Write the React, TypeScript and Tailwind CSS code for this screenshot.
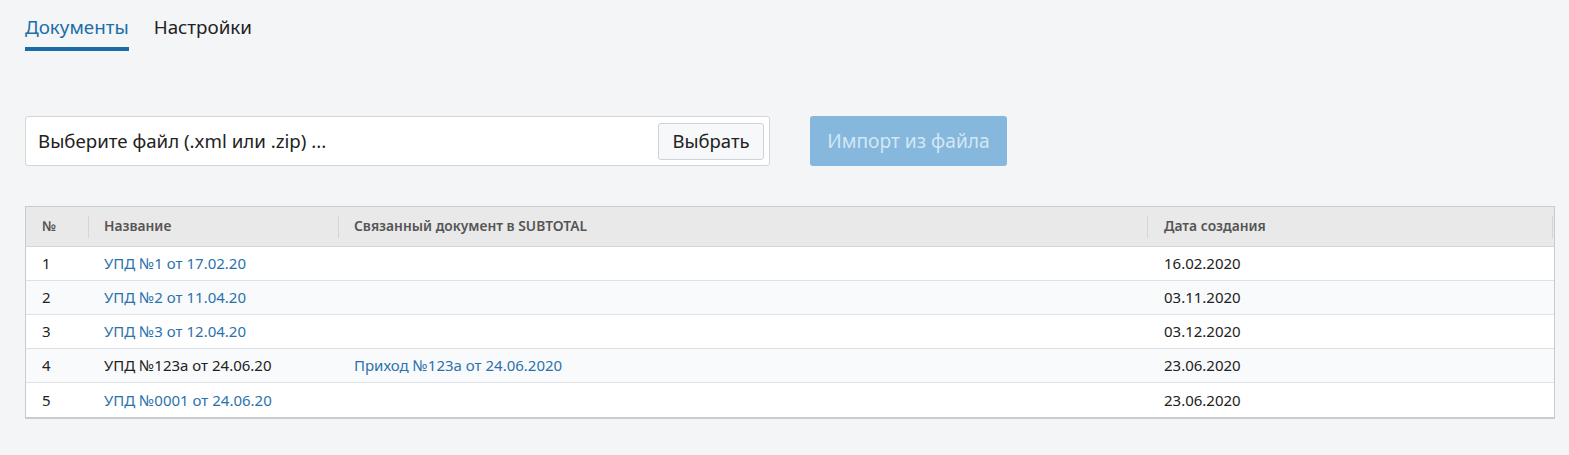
import React from "react";

const rows = [
  { n: "1", name: "УПД №1 от 17.02.20", link: true, rel: "", date: "16.02.2020" },
  { n: "2", name: "УПД №2 от 11.04.20", link: true, rel: "", date: "03.11.2020" },
  { n: "3", name: "УПД №3 от 12.04.20", link: true, rel: "", date: "03.12.2020" },
  { n: "4", name: "УПД №123а от 24.06.20", link: false, rel: "Приход №123а от 24.06.2020", date: "23.06.2020" },
  { n: "5", name: "УПД №0001 от 24.06.20", link: true, rel: "", date: "23.06.2020" },
];

function HeadCell({ label, pad }: { label: string; pad: string }) {
  return (
    <div className={`flex items-center justify-between h-full ${pad}`}>
      <span>{label}</span>
      <span className="w-px h-[22px] bg-[#d5d5d5]" />
    </div>
  );
}

export default function App() {
  return (
    <div
      className="min-h-[455px] bg-[#f4f5f7] px-[25px] pt-[12px] text-[#222]"
      style={{ fontFamily: '"Noto Sans", "Open Sans", sans-serif' }}
    >
      <div className="flex gap-[25px] text-[18.8px]">
        <div className="flex flex-col">
          <span className="text-[#1c6ea8] leading-[30px]">Документы</span>
          <span className="mt-[5px] h-[4px] bg-[#196ca8]" />
        </div>
        <div className="flex flex-col">
          <span className="text-[#222] leading-[30px]">Настройки</span>
        </div>
      </div>

      <div className="mt-[65px] flex items-center gap-[40px]">
        <div className="w-[745px] h-[50px] bg-white border border-[#d6d6d6] rounded-[3px] flex items-center justify-between pl-[12px] pr-[5px]">
          <span className="text-[18.7px]">Выберите файл (.xml или .zip) ...</span>
          <button className="h-[37px] w-[106px] bg-[#f7f8fa] border border-[#cfd2d6] rounded-[3px] text-[18.5px] text-[#222]">
            Выбрать
          </button>
        </div>
        <button className="h-[50px] w-[197px] bg-[#85b8dc] rounded-[3px] text-[19.2px] text-[#d3e7f5]">
          Импорт из файла
        </button>
      </div>

      <div className="mt-[40px] w-[1530px] border border-[#c9cbcd] border-b-2 bg-white text-[15px]">
        <div className="grid grid-cols-[63px_250px_809px_1fr] h-[40px] bg-[#e9e9e9] border-b border-[#d4d6d8] font-semibold text-[#555] text-[13.8px]">
          <HeadCell label="№" pad="pl-[16px]" />
          <HeadCell label="Название" pad="pl-[15px]" />
          <HeadCell label="Связанный документ в SUBTOTAL" pad="pl-[15px]" />
          <HeadCell label="Дата создания" pad="pl-[16px] pr-px" />
        </div>
        {rows.map((r, i) => (
          <div
            key={r.n}
            className={`grid grid-cols-[63px_250px_809px_1fr] h-[34px] items-center ${
              i % 2 === 1 ? "bg-[#f9fafc]" : "bg-white"
            } ${i < rows.length - 1 ? "border-b border-[#dfe2e5]" : ""}`}
          >
            <span className="pl-[16px] text-[#222]">{r.n}</span>
            <span className={`pl-[15px] ${r.link ? "text-[#2b72ad]" : "text-[#222]"}`}>{r.name}</span>
            <span className="pl-[15px] text-[#2b72ad]">{r.rel}</span>
            <span className="pl-[16px] text-[#222]">{r.date}</span>
          </div>
        ))}
      </div>
    </div>
  );
}
